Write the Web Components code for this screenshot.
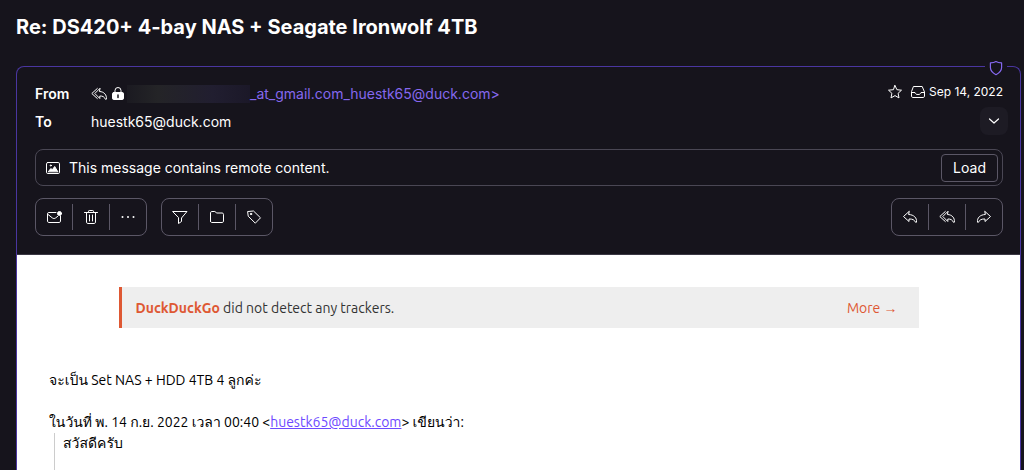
<!DOCTYPE html>
<html lang="en">
<head>
<meta charset="utf-8">
<meta name="viewport" content="width=device-width, initial-scale=1">
<title>Re: DS420+ 4-bay NAS + Seagate Ironwolf 4TB</title>
<style>
  html, body { height: 100%; }
  body {
    --bg: #16141c;
    --line: #5b5766;
    --accent: #8568ee;
    margin: 0;
    background: var(--bg);
    color: #fff;
    font: 14px/20px Inter, "Liberation Sans", sans-serif;
  }
</style>
</head>
<body>
<mail-view subject="Re: DS420+ 4-bay NAS + Seagate Ironwolf 4TB">
  <mail-header slot="header" to="huestk65@duck.com" date="Sep 14, 2022">_at_gmail.com_huestk65@duck.com&gt;</mail-header>
  <mail-body>
    <tracker-banner slot="banner"></tracker-banner>
  </mail-body>
</mail-view>

<script>
// icons, all drawn on a 16x16 grid
const REPLY = '<path d="M7 2.500 1.500 7.500 7 12.500V10c3.500-.1 5.500.8 6.500 3.200.2.500.9.400 1-.2C15 9 12 5.700 7 5.500z"/>';
const REPLY_ALL = '<path d="M8.800 2.500 3.800 7.500l5 5V10c2.800-.1 4.600.8 5.600 3.200.2.500.9.400 1-.2.400-4-2.200-7.300-6.600-7.500z"/><path d="M6.300 2.500.8 7.500l5.500 5"/>';
const ICONS = {
  'reply': REPLY,
  'reply-all': REPLY_ALL,
  'forward': '<g transform="matrix(-1 0 0 1 16 0)">' + REPLY + '</g>',
  'lock': '<path d="M5 7V4.500a3 3 0 0 1 6 0V7"/><rect x="2.500" y="6.500" width="11" height="7" rx="1.300" fill="currentColor"/><path d="M8 9v2.500" stroke="#16141c" stroke-width="1.500"/>',
  'star': '<path d="m8 1.500 1.900 4.200 4.600.5-3.400 3.100.9 4.600L8 11.600l-4 2.300.9-4.600-3.400-3.100 4.600-.5z"/>',
  'inbox': '<path d="M3.800 2.500h8.400l2.300 5.500v4.200c0 .7-.6 1.300-1.300 1.300H2.800c-.7 0-1.300-.6-1.300-1.300V8z"/><path d="M1.500 8.500H5c.3 1.500 1.300 2 3 2s2.700-.5 3-2h3.500"/>',
  'chevron': '<path d="m3.500 6 4.500 4 4.500-4" stroke-width="1.200"/>',
  'shield': '<path d="M8 1.500c1.800 1.100 3.600 1.300 5.600 1.400v4.600c0 3.200-2.600 5.600-5.600 7.200-3-1.600-5.600-4-5.600-7.200V2.900c2-.1 3.800-.3 5.600-1.400z" stroke-width="1.200"/>',
  'image': '<rect x="1.500" y="2.500" width="13" height="11" rx="1.300"/><path d="m3.500 11.500 2.300-3 1.500 1.300 2.400-3.300 3 5z" fill="currentColor"/><circle cx="5.800" cy="5.500" r=".6" fill="currentColor"/>',
  'unread': '<path d="M10 3.500H2.800c-.7 0-1.300.5-1.300 1.200v7.500c0 .7.600 1.300 1.300 1.300h10.400c.7 0 1.300-.6 1.300-1.300V7"/><path d="m1.700 5.200 4.600 3.700c1 .8 2.400.8 3.400 0l2-1.600"/><circle cx="13.500" cy="4.500" r="2" fill="currentColor"/>',
  'trash': '<path d="M1.500 3.500h13M5.500 3.500V2.300c0-.5.300-.8.800-.8h3.400c.5 0 .8.300.8.800v1.200M3.500 3.500v9.700c0 .7.600 1.300 1.300 1.300h6.400c.7 0 1.300-.6 1.300-1.300V3.500M6.500 6v6M9.500 6v6"/>',
  'dots': '<g fill="currentColor" stroke="none"><circle cx="2.500" cy="8" r="1"/><circle cx="8" cy="8" r="1"/><circle cx="13.500" cy="8" r="1"/></g>',
  'filter': '<path d="M1 2.500h14L9.500 9v3.500l-3 2V9z"/>',
  'folder': '<path d="M1.500 12.200V3.800c0-.7.600-1.300 1.300-1.300h3l2 1.500h5.400c.7 0 1.300.6 1.300 1.300v6.900c0 .7-.6 1.300-1.300 1.300H2.800c-.7 0-1.300-.6-1.300-1.300z"/>',
  'tag': '<path d="M2 2.500 7.500 2l7 6.800-5.200 5.400L2.500 7.500z"/><circle cx="5" cy="5" r=".7" fill="currentColor"/>'
};

class MailIcon extends HTMLElement {
  constructor() {
    super();
    this.attachShadow({ mode: 'open' });
  }

  connectedCallback() {
    this.shadowRoot.innerHTML = `
      <style>
        :host { display: block; width: 16px; height: 16px; flex: none; }
        svg { display: block; }
      </style>
      <svg width="16" height="16" viewBox="0 0 16 16" fill="none" stroke="currentColor"
        stroke-linejoin="round" stroke-linecap="round" aria-hidden="true">${ICONS[this.getAttribute('name')]}</svg>
    `;
  }
}

// actions="icon:label,icon:label"
class ButtonGroup extends HTMLElement {
  constructor() {
    super();
    this.attachShadow({ mode: 'open' });
  }

  connectedCallback() {
    const buttons = this.getAttribute('actions').split(',').map((item) => {
      const [icon, label] = item.split(':');
      return `<button type="button" aria-label="${label}"><mail-icon name="${icon}"></mail-icon></button>`;
    });
    this.shadowRoot.innerHTML = `
      <style>
        :host {
          display: flex;
          align-items: center;
          height: 36px;
          border: 1px solid var(--line);
          border-radius: 8px;
        }
        button {
          display: grid;
          place-items: center;
          box-sizing: content-box;
          width: 36px;
          height: 26px;
          padding: 0;
          border: 0;
          background: none;
          color: #fff;
        }
        button + button { border-left: 1px solid var(--line); }
      </style>
      ${buttons.join('')}
    `;
  }
}

class MailHeader extends HTMLElement {
  constructor() {
    super();
    this.attachShadow({ mode: 'open' });
  }

  connectedCallback() {
    this.shadowRoot.innerHTML = `
      <style>
        :host {
          display: block;
          padding: 12px 17px 18px 18px;
          border-bottom: 1px solid #3a3743;
        }
        .row { display: flex; align-items: center; height: 28px; }
        .label, .from, .to { padding-top: 2px; }
        .label { width: 56px; flex: none; font-weight: 600; }
        .from { display: flex; align-items: center; flex: 1; min-width: 0; color: var(--accent); }
        .from mail-icon { color: #fff; margin-right: 3px; }
        .from mail-icon + mail-icon { margin-right: 1px; }
        .hidden-name {
          width: 123px;
          height: 18px;
          background: linear-gradient(90deg, #1b1a21, #242427 25%, #211e30 70%, #1b1828);
        }
        .date { display: flex; align-items: center; font-size: 12px; margin-top: -2px; }
        .date mail-icon { margin-right: 7px; }
        .date mail-icon + mail-icon { margin-right: 3px; }
        .to { flex: 1; }
        .more {
          display: grid;
          place-items: center;
          width: 28px;
          height: 28px;
          margin-right: -5px;
          padding: 0;
          border: 0;
          border-radius: 8px;
          background: #1d1b24;
          color: #fff;
        }
        .notice {
          display: flex;
          align-items: center;
          gap: 8px;
          margin-top: 14px;
          padding: 4px 4px 3px 9px;
          border: 1px solid #4a4754;
          border-radius: 8px;
        }
        .notice span { flex: 1; }
        .load {
          height: 28px;
          padding: 0 11px;
          border: 1px solid var(--line);
          border-radius: 4px;
          background: none;
          color: #fff;
          font: inherit;
        }
        .toolbar { display: flex; gap: 14px; margin-top: 12px; }
        .toolbar :last-child { margin-left: auto; }
      </style>
      <div class="row">
        <span class="label">From</span>
        <span class="from">
          <mail-icon name="reply-all"></mail-icon>
          <mail-icon name="lock"></mail-icon>
          <span class="hidden-name"></span>
          <slot></slot>
        </span>
        <span class="date">
          <mail-icon name="star"></mail-icon>
          <mail-icon name="inbox"></mail-icon>
          <time>${this.getAttribute('date')}</time>
        </span>
      </div>
      <div class="row">
        <span class="label">To</span>
        <span class="to">${this.getAttribute('to')}</span>
        <button class="more" type="button" aria-label="Show details"><mail-icon name="chevron"></mail-icon></button>
      </div>
      <div class="notice">
        <mail-icon name="image"></mail-icon>
        <span>This message contains remote content.</span>
        <button class="load" type="button">Load</button>
      </div>
      <div class="toolbar">
        <button-group actions="unread:Mark as unread,trash:Move to trash,dots:More"></button-group>
        <button-group actions="filter:Filter on,folder:Move to,tag:Label as"></button-group>
        <button-group actions="reply:Reply,reply-all:Reply all,forward:Forward"></button-group>
      </div>
    `;
  }
}

class TrackerBanner extends HTMLElement {
  constructor() {
    super();
    this.attachShadow({ mode: 'open' });
  }

  connectedCallback() {
    this.shadowRoot.innerHTML = `
      <style>
        :host {
          display: flex;
          justify-content: space-between;
          align-items: center;
          box-sizing: border-box;
          width: 100%;
          max-width: 800px;
          margin: 0 auto;
          padding: 11px 21px 9px 14px;
          border-left: 3px solid #de5833;
          background: #eee;
          color: #333;
        }
        strong, a { color: #de5833; }
        a { text-decoration: none; }
      </style>
      <span><strong>DuckDuckGo</strong> did not detect any trackers.</span>
      <a href="#">More →</a>
    `;
  }
}

class MailBody extends HTMLElement {
  constructor() {
    super();
    this.attachShadow({ mode: 'open' });
  }

  connectedCallback() {
    this.shadowRoot.innerHTML = `
      <style>
        :host {
          display: flex;
          flex-direction: column;
          flex: 1;
          padding: 32px 32px 0;
          background: #fff;
          color: #000;
          font: 14px/21px Ubuntu, Loma, "Noto Sans Thai Looped", Waree, "Noto Sans Thai", "Noto Sans", sans-serif;
        }
        p { margin: 0 0 21px; }
        .first { margin-top: 42px; }
        .intro { margin: 0; }
        a { color: #6d4aff; }
        blockquote {
          flex: 1;
          margin: 0 0 0 5px;
          padding-left: 8px;
          border-left: 1px solid #ccc;
        }
      </style>
      <slot name="banner"></slot>
      <p class="first" lang="th">จะเป็น Set NAS + HDD 4TB 4 ลูกค่ะ</p>
      <p class="intro" lang="th">ในวันที่ พ. 14 ก.ย. 2022 เวลา 00:40 &lt;<a href="mailto:huestk65@duck.com">huestk65@duck.com</a>&gt; เขียนว่า:</p>
      <blockquote lang="th">สวัสดีครับ</blockquote>
    `;
  }
}

class MailView extends HTMLElement {
  constructor() {
    super();
    this.attachShadow({ mode: 'open' });
  }

  connectedCallback() {
    this.shadowRoot.innerHTML = `
      <style>
        :host { display: flex; flex-direction: column; min-height: 100%; }
        h1 { margin: 0; padding: 13px 16px 25px; font-size: 20px; line-height: 28px; font-weight: 700; }
        article {
          position: relative;
          display: flex;
          flex-direction: column;
          flex: 1;
          margin: 0 3px 0 16px;
          border: 1px solid #4a36a0;
          border-bottom: 0;
          border-radius: 8px 8px 0 0;
        }
        /* sits over the top border */
        .badge {
          position: absolute;
          top: -7px;
          right: 13px;
          padding: 0 3px;
          background: var(--bg);
          color: var(--accent);
        }
      </style>
      <h1>${this.getAttribute('subject')}</h1>
      <article>
        <span class="badge"><mail-icon name="shield"></mail-icon></span>
        <slot name="header"></slot>
        <slot></slot>
      </article>
    `;
  }
}

customElements.define('mail-icon', MailIcon);
customElements.define('button-group', ButtonGroup);
customElements.define('tracker-banner', TrackerBanner);
customElements.define('mail-body', MailBody);
customElements.define('mail-header', MailHeader);
customElements.define('mail-view', MailView);
</script>
</body>
</html>
